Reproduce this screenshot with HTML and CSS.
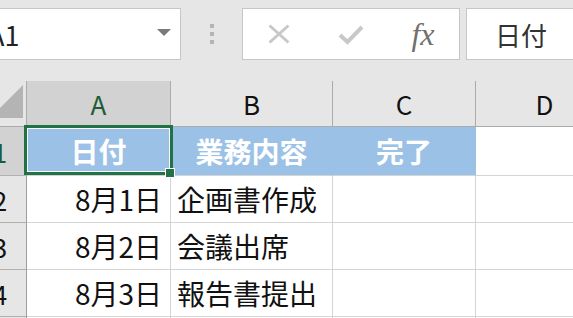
FILE: index.html
```html
<!DOCTYPE html>
<html lang="ja">
<head>
  <meta charset="UTF-8" />
  <title>Book1 - Excel</title>
  <link rel="stylesheet" href="styles.css">
</head>
<body>
  <div class="app">
    <!-- Name box + formula bar -->
    <div class="toolbar">
      <div class="namebox">A1<span class="caret"></span></div>
      <div class="grip"><i></i><i></i><i></i></div>
      <div class="fbtns">
        <span class="fbtn">
          <svg width="22" height="20" viewBox="0 0 22 20"><path d="M1.5 1.5 L20.5 18.5 M20.5 1.5 L1.5 18.5" stroke="#c8c8c8" stroke-width="3" fill="none"/></svg>
        </span>
        <span class="fbtn">
          <svg width="26" height="21" viewBox="0 0 26 21"><path d="M2 11 L9.5 18 L24 3" stroke="#c8c8c8" stroke-width="4" fill="none"/></svg>
        </span>
        <span class="fbtn fx">fx</span>
      </div>
      <div class="formula">日付</div>
    </div>

    <!-- Grid -->
    <div class="sheet">
      <div class="corner"><span class="tri"></span></div>
      <div class="colhead sel">A</div>
      <div class="colhead">B</div>
      <div class="colhead">C</div>
      <div class="colhead">D</div>

      <div class="rowhead sel">1</div>
      <div class="cell th">日付</div>
      <div class="cell th">業務内容</div>
      <div class="cell th">完了</div>
      <div class="cell"></div>

      <div class="rowhead">2</div>
      <div class="cell num">8月1日</div>
      <div class="cell">企画書作成</div>
      <div class="cell"></div>
      <div class="cell"></div>

      <div class="rowhead">3</div>
      <div class="cell num">8月2日</div>
      <div class="cell">会議出席</div>
      <div class="cell"></div>
      <div class="cell"></div>

      <div class="rowhead">4</div>
      <div class="cell num">8月3日</div>
      <div class="cell">報告書提出</div>
      <div class="cell"></div>
      <div class="cell"></div>

      <div class="rowhead"></div>
      <div class="cell"></div>
      <div class="cell"></div>
      <div class="cell"></div>
      <div class="cell"></div>

      <!-- active cell frame -->
      <div class="selection"><span class="handle"></span></div>
    </div>
  </div>
</body>
</html>
```

FILE: styles.css
```css
:root{
  --xl-green:#217346;
  --head-bg:#e6e6e6;
  --head-sel:#d2d2d2;
  --head-line:#ababab;
  --grid:#d4d4d4;
  --fill:#9bc2e6;
}
*{box-sizing:border-box;margin:0;padding:0}
body{
  background:var(--head-bg);
  font-family:"Noto Sans CJK JP","Noto Sans",sans-serif;
  color:#222;
  overflow:hidden;
}
.app{margin-left:-26px;width:640px}

/* ── Name box / formula bar ───────────────────────── */
.toolbar{
  height:81px;
  display:flex;
  align-items:flex-start;
  padding-top:8px;
}
.namebox{
  margin-left:4px;
  width:203px;height:52px;
  background:#fff;border:1px solid #c6c6c6;
  display:flex;align-items:center;
  padding-left:9px;
  font-size:27px;color:#222;
}
.caret{
  margin-left:auto;margin-right:9px;margin-bottom:3px;
  width:0;height:0;
  border-left:7px solid transparent;
  border-right:7px solid transparent;
  border-top:7px solid #7a7a7a;
}
.grip{
  margin-left:29px;margin-top:16px;
  display:flex;flex-direction:column;gap:4px;
}
.grip i{display:block;width:4px;height:4px;background:#b4b4b4}
.fbtns{
  margin-left:28px;
  width:218px;height:52px;
  background:#fff;border:1px solid #c6c6c6;
  display:grid;grid-template-columns:repeat(3,72px);
  place-items:center;
}
.fbtn{display:flex;align-items:center;justify-content:center}
.fbtn.fx{
  font-family:"Liberation Serif",serif;
  font-style:italic;font-size:32px;color:#707070;
  line-height:1;
}
.formula{
  margin-left:6px;
  flex:1;height:52px;
  background:#fff;border:1px solid #c6c6c6;
  display:flex;align-items:center;
  padding-left:28px;
  font-size:26px;color:#333;
}

/* ── Grid ─────────────────────────────────────────── */
.sheet{
  position:relative;
  display:grid;
  grid-template-columns:53px 144px 162px 143px 138px;
  grid-template-rows:46px 49px 47px 47px 47px 47px;
  background:#fff;
}
.corner,.colhead,.rowhead{
  background:var(--head-bg);
  border-right:1px solid var(--head-line);
  border-bottom:1px solid var(--head-line);
}
.corner{display:flex;align-items:flex-end;justify-content:flex-end;padding:0 3px 8px 0}
.tri{
  width:0;height:0;
  border-left:33px solid transparent;
  border-bottom:33px solid #b4b4b4;
}
.colhead{
  display:flex;align-items:center;justify-content:center;
  font-size:26px;color:#111;
}
.rowhead{
  display:flex;align-items:center;justify-content:center;
  font-size:26px;color:#111;
  border-right-color:#9e9e9e;
  border-bottom-color:#b0b0b0;
}
.colhead.sel,.rowhead.sel{background:var(--head-sel);color:#1e5c38}

.cell{
  border-right:1px solid var(--grid);
  border-bottom:1px solid var(--grid);
  display:flex;align-items:center;
  padding:0 6px;
  font-size:28px;color:#111;
  white-space:nowrap;overflow:hidden;
}
.cell.num{justify-content:flex-end;padding-right:8px}
.cell.th{
  background:var(--fill);
  border-right-color:var(--fill);
  justify-content:center;
  color:#fff;font-weight:700;
}

.selection{
  position:absolute;
  left:50px;top:44px;
  width:149px;height:50px;
  border:3px solid var(--xl-green);
  box-shadow:inset 0 0 0 1px #fff;
}
.handle{
  position:absolute;
  left:138px;top:40px;
  width:10px;height:10px;
  background:var(--xl-green);
  border:1px solid #fff;
}
```
